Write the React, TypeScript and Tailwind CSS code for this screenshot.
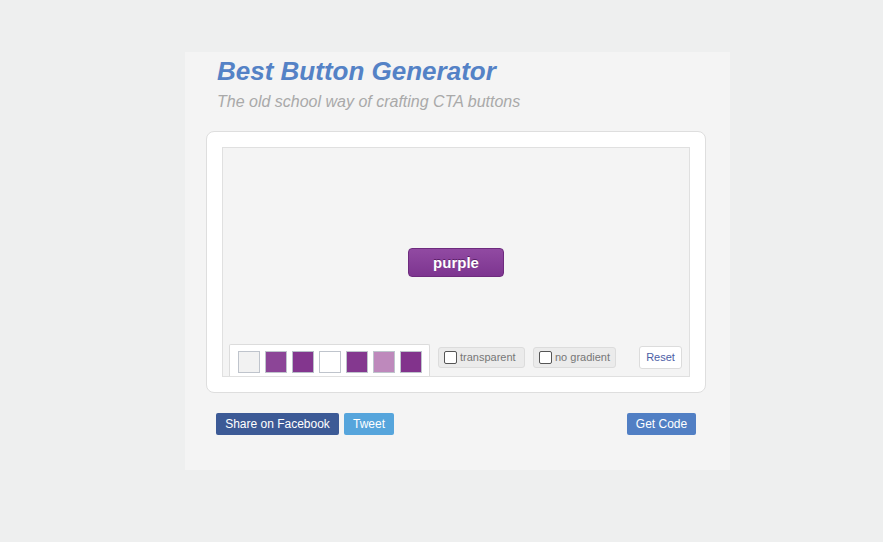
import { useState } from "react";

const swatches = ["#f2f2f2", "#8c4597", "#83368e", "#ffffff", "#84388f", "#be89bc", "#82338c"];

function Option({ label, width }: { label: string; width: string }) {
  const [checked, setChecked] = useState(false);
  return (
    <label
      className={`flex h-[21px] cursor-pointer items-center gap-[3px] whitespace-nowrap rounded-[3px] border border-[#dcdcdc] bg-[#ebebeb] pl-[5px] text-[11px] text-[#777] ${width}`}
    >
      <input
        type="checkbox"
        checked={checked}
        onChange={(e) => setChecked(e.target.checked)}
        className="m-0 h-[13px] w-[13px] shrink-0 appearance-none rounded-[2px] border border-[#555] bg-white"
      />
      {label}
    </label>
  );
}

export default function App() {
  const [color, setColor] = useState(2);

  return (
    <div className="min-h-[542px] bg-[#eeefef] pt-[52px] font-['Liberation_Sans',Arial,sans-serif]">
      <div className="ml-[185px] w-[545px] bg-[#f4f4f4] pb-[35px] pt-[4px]">
        <h1 className="pl-[32px] text-[26px] font-bold italic leading-[30px] text-[#5482c6]">
          Best Button Generator
        </h1>
        <p className="mt-[6px] pl-[32px] text-[16px] italic leading-[20px] text-[#a9a9a9]">
          The old school way of crafting CTA buttons
        </p>

        <div className="ml-[21px] mt-[19px] w-[500px] rounded-[8px] border border-[#dedede] bg-white p-[15px]">
          <div className="grid h-[230px] border border-[#e0e0e0] bg-[#f4f4f4]">
            <div className="col-start-1 row-start-1 flex items-center justify-center">
              <button className="h-[29px] w-[96px] rounded-[4px] border border-[#6e2b7e] bg-gradient-to-b from-[#914aa2] to-[#7d3590] pt-[2px] text-[15px] font-bold text-white [text-shadow:0_-1px_0_#5a1f68]">
                purple
              </button>
            </div>

            <div className="col-start-1 row-start-1 flex items-end self-end pl-[6px] pr-[7px]">
              <div className="flex gap-[5px] rounded-t-[2px] border border-b-0 border-[#dcdcdc] bg-white pb-[3px] pl-[8px] pr-[7px] pt-[6px]">
                {swatches.map((c, i) => (
                  <button
                    key={i}
                    onClick={() => setColor(i)}
                    className={`h-[22px] w-[22px] border ${color === i ? "border-[#b8bec8]" : "border-[#bfc4cc]"}`}
                    style={{ backgroundColor: c }}
                  />
                ))}
              </div>
              <div className="mb-[8px] ml-[8px] flex gap-[8px]">
                <Option label="transparent" width="w-[87px]" />
                <Option label="no gradient" width="w-[83px]" />
              </div>
              <button className="mb-[7px] ml-auto h-[23px] w-[43px] rounded-[3px] border border-[#dcdcdc] bg-white text-[11px] text-[#4c5ea6]">
                Reset
              </button>
            </div>
          </div>
        </div>

        <div className="ml-[31px] mr-[34px] mt-[20px] flex items-center gap-[5px] text-[12px] text-white">
          <button className="h-[22px] w-[123px] rounded-[2px] bg-[#3c5a96]">Share on Facebook</button>
          <button className="h-[22px] w-[50px] rounded-[2px] bg-[#56a5dc]">Tweet</button>
          <button className="ml-auto h-[22px] w-[69px] rounded-[2px] bg-[#517fc4]">Get Code</button>
        </div>
      </div>
    </div>
  );
}
